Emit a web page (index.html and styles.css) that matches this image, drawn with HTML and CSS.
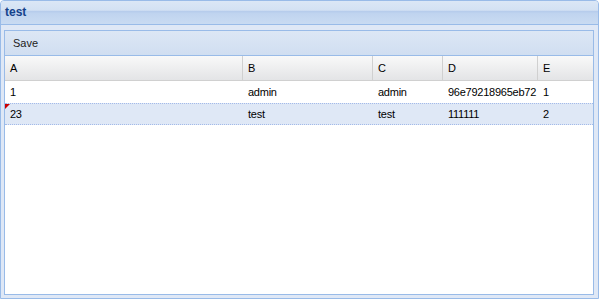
FILE: index.html
```html
<html lang="en"><head>
    <meta charset="UTF-8">
    <title>test</title>
    <link rel="stylesheet" href="styles.css">
</head>
<body>
    <div class="window">
        <div class="window-header">test</div>
        <div class="window-body">
            <div class="grid-panel">
                <div class="toolbar">
                    <span class="tb-btn">Save</span>
                </div>
                <div class="grid-head row-cols">
                    <div class="col col-a">A</div>
                    <div class="col col-b">B</div>
                    <div class="col col-c">C</div>
                    <div class="col col-d">D</div>
                    <div class="col col-e">E</div>
                </div>
                <div class="grid-body">
                    <div class="grid-row row-cols">
                        <div class="cell col-a">1</div>
                        <div class="cell col-b">admin</div>
                        <div class="cell col-c">admin</div>
                        <div class="cell col-d">96e79218965eb72</div>
                        <div class="cell col-e">1</div>
                    </div>
                    <div class="grid-row row-cols selected">
                        <div class="cell col-a dirty">23</div>
                        <div class="cell col-b">test</div>
                        <div class="cell col-c">test</div>
                        <div class="cell col-d">111111</div>
                        <div class="cell col-e">2</div>
                    </div>
                </div>
            </div>
        </div>
    </div>
</body></html>
```

FILE: styles.css
```css
body {
    margin: 0;
    font-family: "Liberation Sans", Arial, sans-serif;
    font-size: 11px;
    background-color: #fff;
}
.window {
    width: 599px;
    height: 299px;
    box-sizing: border-box;
    border: 1px solid #99bbe8;
    border-radius: 4px 4px 0 0;
    background-color: #dfe8f6;
    display: flex;
    flex-direction: column;
}
.window-header {
    height: 23px;
    line-height: 23px;
    padding-left: 4px;
    font-size: 12px;
    font-weight: bold;
    color: #15428b;
    border-bottom: 1px solid #99bbe8;
    border-radius: 3px 3px 0 0;
    background: linear-gradient(#dbe7f6 0, #d3e1f3 40%, #b6ccec 45%, #c0d4ef 55%, #c9dbf2 100%);
}
.window-body {
    flex: 1;
    padding: 5px 4px 3px 3px;
    display: flex;
}
.grid-panel {
    flex: 1;
    border: 1px solid #99bbe8;
    background-color: #fff;
    display: flex;
    flex-direction: column;
}
.toolbar {
    height: 24px;
    border-bottom: 1px solid #99bbe8;
    background: linear-gradient(#dce7f5, #d0def1);
    display: flex;
    align-items: center;
    padding-left: 8px;
}
.tb-btn {
    color: #222;
}
.row-cols {
    display: flex;
}
.col-a { width: 237px; }
.col-b { width: 130px; }
.col-c { width: 70px; }
.col-d { width: 95px; }
.col-e { width: 56px; }
.grid-head {
    height: 24px;
    border-bottom: 1px solid #d0d0d0;
    background: linear-gradient(#f9f9f9, #e3e4e6);
}
.col {
    box-sizing: border-box;
    padding-left: 5px;
    line-height: 24px;
    color: #000;
}
.col + .col {
    border-left: 1px solid #d0d0d0;
    padding-left: 5px;
}
.grid-row {
    height: 22px;
    box-sizing: border-box;
    border-top: 1px solid #fff;
    border-bottom: 1px solid #fff;
}
.grid-row.selected {
    background-color: #dfe8f6;
    border-top: 1px dotted #a3bae9;
    border-bottom: 1px dotted #a3bae9;
}
.cell {
    box-sizing: border-box;
    padding-left: 5px;
    line-height: 20px;
    color: #000;
    white-space: nowrap;
    overflow: hidden;
    letter-spacing: -0.25px;
}
.cell + .cell {
    padding-left: 6px;
}
.dirty {
    position: relative;
}
.dirty::before {
    content: "";
    position: absolute;
    left: 0;
    top: 0;
    border-top: 5px solid #c00;
    border-right: 5px solid transparent;
}
```
